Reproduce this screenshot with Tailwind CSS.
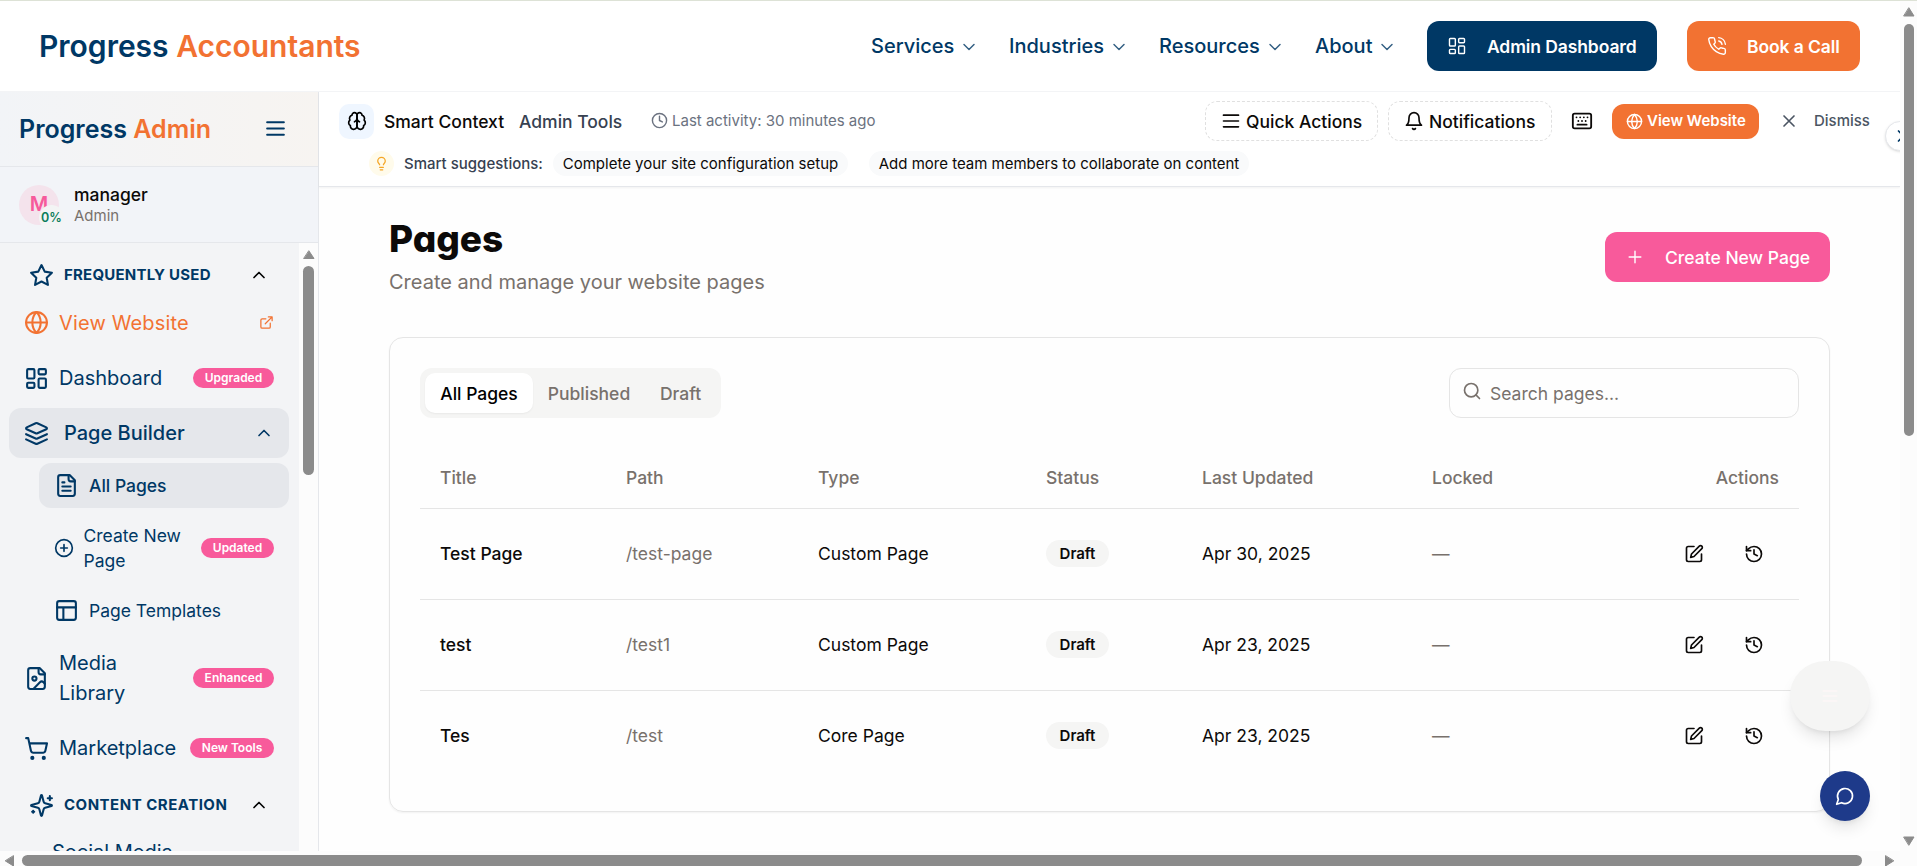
<!DOCTYPE html>
<html lang="en">
<head>
<meta charset="utf-8">
<title>Progress Accountants – Pages</title>
<script src="https://cdn.jsdelivr.net/npm/@tailwindcss/browser@4"></script>
</head>
<body class="font-['Inter','Liberation_Sans',sans-serif] text-[17.5px] leading-[25px] text-[#0c0a09] bg-white [&_svg]:[stroke-linecap:round] [&_svg]:[stroke-linejoin:round]">
<svg class="hidden" xmlns="http://www.w3.org/2000/svg">
  <symbol id="dash" viewBox="0 0 24 24"><rect width="7" height="9" x="3" y="3" rx="1"/><rect width="7" height="5" x="14" y="3" rx="1"/><rect width="7" height="9" x="14" y="12" rx="1"/><rect width="7" height="5" x="3" y="16" rx="1"/></symbol>
  <symbol id="phone" viewBox="0 0 24 24"><path d="M22 16.92v3a2 2 0 0 1-2.18 2 19.79 19.79 0 0 1-8.63-3.07 19.5 19.5 0 0 1-6-6 19.79 19.79 0 0 1-3.07-8.67A2 2 0 0 1 4.11 2h3a2 2 0 0 1 2 1.72 12.84 12.84 0 0 0 .7 2.81 2 2 0 0 1-.45 2.11L8.09 9.91a16 16 0 0 0 6 6l1.27-1.27a2 2 0 0 1 2.11-.45 12.84 12.84 0 0 0 2.81.7A2 2 0 0 1 22 16.92z"/><path d="M14.05 2a9 9 0 0 1 8 7.94"/><path d="M14.05 6A5 5 0 0 1 18 10"/></symbol>
  <symbol id="down" viewBox="0 0 24 24"><path d="m6 9 6 6 6-6"/></symbol>
  <symbol id="up" viewBox="0 0 24 24"><path d="m18 15-6-6-6 6"/></symbol>
  <symbol id="right" viewBox="0 0 24 24"><path d="m9 18 6-6-6-6"/></symbol>
  <symbol id="menu" viewBox="0 0 24 24"><path d="M4 6h16M4 12h16M4 18h16"/></symbol>
  <symbol id="menuwide" viewBox="0 0 24 24"><path d="M3 5h18M3 12h18M3 19h18"/></symbol>
  <symbol id="brain" viewBox="0 0 24 24"><path d="M12 5a3 3 0 1 0-5.997.125 4 4 0 0 0-2.526 5.77 4 4 0 0 0 .556 6.588A4 4 0 1 0 12 18Z"/><path d="M12 5a3 3 0 1 1 5.997.125 4 4 0 0 1 2.526 5.77 4 4 0 0 1-.556 6.588A4 4 0 1 1 12 18Z"/><path d="M15 13a4.5 4.5 0 0 1-3-4 4.500 4.500 0 0 1-3 4"/></symbol>
  <symbol id="clock" viewBox="0 0 24 24"><circle cx="12" cy="12" r="10"/><path d="M12 6v6l4 2"/></symbol>
  <symbol id="bulb" viewBox="0 0 24 24"><path d="M15 14c.2-1 .7-1.700 1.500-2.500 1-.9 1.500-2.200 1.500-3.500A6 6 0 0 0 6 8c0 1 .2 2.200 1.500 3.500.7.7 1.300 1.500 1.500 2.500"/><path d="M9 18h6M10 22h4"/></symbol>
  <symbol id="bell" viewBox="0 0 24 24"><path d="M6 8a6 6 0 0 1 12 0c0 7 3 9 3 9H3s3-2 3-9"/><path d="M10.300 21a1.940 1.940 0 0 0 3.400 0"/></symbol>
  <symbol id="keyb" viewBox="0 0 24 24"><path d="M6 8h.01M10 8h.01M14 8h.01M18 8h.01M8 12h.01M12 12h.01M16 12h.01M7 16h10"/><rect width="20" height="16" x="2" y="4" rx="2"/></symbol>
  <symbol id="globe" viewBox="0 0 24 24"><circle cx="12" cy="12" r="10"/><path d="M12 2a14.500 14.500 0 0 0 0 20 14.500 14.500 0 0 0 0-20M2 12h20"/></symbol>
  <symbol id="x" viewBox="0 0 24 24"><path d="M18 6 6 18M6 6l12 12"/></symbol>
  <symbol id="plus" viewBox="0 0 24 24"><path d="M5 12h14M12 5v14"/></symbol>
  <symbol id="search" viewBox="0 0 24 24"><circle cx="11" cy="11" r="8"/><path d="m21 21-4.300-4.300"/></symbol>
  <symbol id="edit" viewBox="0 0 24 24"><path d="M12 3H5a2 2 0 0 0-2 2v14a2 2 0 0 0 2 2h14a2 2 0 0 0 2-2v-7"/><path d="M18.375 2.625a2.121 2.121 0 1 1 3 3L12 15l-4 1 1-4Z"/></symbol>
  <symbol id="hist" viewBox="0 0 24 24"><path d="M3 12a9 9 0 1 0 9-9 9.750 9.750 0 0 0-6.740 2.740L3 8"/><path d="M3 3v5h5M12 7v5l4 2"/></symbol>
  <symbol id="star" viewBox="0 0 24 24"><path d="M12 2l3.090 6.260L22 9.270l-5 4.870 1.180 6.880L12 17.770l-6.180 3.250L7 14.140 2 9.270l6.910-1.010L12 2z"/></symbol>
  <symbol id="ext" viewBox="0 0 24 24"><path d="M15 3h6v6M10 14 21 3M18 13v6a2 2 0 0 1-2 2H5a2 2 0 0 1-2-2V8a2 2 0 0 1 2-2h6"/></symbol>
  <symbol id="layers" viewBox="0 0 24 24"><path d="m12.830 2.180a2 2 0 0 0-1.660 0L2.600 6.080a1 1 0 0 0 0 1.830l8.580 3.910a2 2 0 0 0 1.660 0l8.580-3.900a1 1 0 0 0 0-1.830Z"/><path d="m22 17.650-9.170 4.160a2 2 0 0 1-1.660 0L2 17.650"/><path d="m22 12.650-9.170 4.160a2 2 0 0 1-1.660 0L2 12.650"/></symbol>
  <symbol id="file" viewBox="0 0 24 24"><path d="M15 2H6a2 2 0 0 0-2 2v16a2 2 0 0 0 2 2h12a2 2 0 0 0 2-2V7Z"/><path d="M14 2v4a2 2 0 0 0 2 2h4M10 9H8M16 13H8M16 17H8"/></symbol>
  <symbol id="cplus" viewBox="0 0 24 24"><circle cx="12" cy="12" r="10"/><path d="M8 12h8M12 8v8"/></symbol>
  <symbol id="layout" viewBox="0 0 24 24"><rect width="18" height="18" x="3" y="3" rx="2"/><path d="M3 9h18M9 21V9"/></symbol>
  <symbol id="fimg" viewBox="0 0 24 24"><path d="M15 2H6a2 2 0 0 0-2 2v16a2 2 0 0 0 2 2h12a2 2 0 0 0 2-2V7Z"/><path d="M14 2v4a2 2 0 0 0 2 2h4"/><circle cx="10" cy="12" r="2"/><path d="m20 17-1.296-1.296a2.410 2.410 0 0 0-3.408 0L9 22"/></symbol>
  <symbol id="cart" viewBox="0 0 24 24"><circle cx="8" cy="21" r="1"/><circle cx="19" cy="21" r="1"/><path d="M2.050 2.050h2l2.660 12.420a2 2 0 0 0 2 1.580h9.780a2 2 0 0 0 1.950-1.570l1.650-7.430H5.120"/></symbol>
  <symbol id="spark" viewBox="0 0 24 24"><path d="M9.937 15.500A2 2 0 0 0 8.500 14.063l-6.135-1.582a.5.5 0 0 1 0-.962L8.500 9.936A2 2 0 0 0 9.937 8.500l1.582-6.135a.5.5 0 0 1 .963 0L14.063 8.500A2 2 0 0 0 15.500 9.937l6.135 1.581a.5.5 0 0 1 0 .964L15.500 14.063a2 2 0 0 0-1.437 1.437l-1.582 6.135a.5.5 0 0 1-.963 0z"/><path d="M20 3v4M22 5h-4M4 17v2M5 18H3"/></symbol>
  <symbol id="chat" viewBox="0 0 24 24"><path d="M7.900 20A9 9 0 1 0 4 16.100L2 22Z"/></symbol>
</svg>

<div class="relative w-[1917px] h-[866px] overflow-hidden flex flex-col">
  <div class="flex h-[851px]">
    <div class="w-[1900px] flex flex-col relative overflow-hidden">
      <!-- Site header -->
      <header class="h-[92px] shrink-0 border-t border-t-[#dde2d6] border-b border-b-[#f3f4f6] flex items-center pl-[39px] pr-10 pb-px text-[#003865]">
        <div class="text-[30px] leading-[38px] font-semibold whitespace-nowrap">Progress <span class="text-[#f27232]">Accountants</span></div>
        <nav class="ml-auto pt-[2px] flex items-center text-[20px] font-medium">
          <a class="flex items-center w-[138px]">Services<svg class="size-5 ml-[5px] fill-none stroke-current stroke-[1.7] opacity-80"><use href="#down"/></svg></a>
          <a class="flex items-center w-[150px]">Industries<svg class="size-5 ml-[5px] fill-none stroke-current stroke-[1.7] opacity-80"><use href="#down"/></svg></a>
          <a class="flex items-center w-[156px]">Resources<svg class="size-5 ml-[5px] fill-none stroke-current stroke-[1.7] opacity-80"><use href="#down"/></svg></a>
          <a class="flex items-center w-[112px]">About<svg class="size-5 ml-[5px] fill-none stroke-current stroke-[1.7] opacity-80"><use href="#down"/></svg></a>
        </nav>
        <a class="w-[230px] h-[50px] rounded-xl bg-[#003865] text-white text-[17.5px] font-semibold flex items-center pl-5 whitespace-nowrap tracking-[-0.1px]"><svg class="size-5 mr-5 fill-none stroke-current stroke-[1.7]"><use href="#dash"/></svg><span class="pt-px">Admin Dashboard</span></a>
        <a class="ml-[30px] w-[173px] h-[50px] rounded-xl bg-[#f27232] text-white text-[17.5px] font-semibold flex items-center pl-5 whitespace-nowrap tracking-[-0.1px]"><svg class="size-5 mr-5 fill-none stroke-current stroke-[1.7]"><use href="#phone"/></svg><span class="pt-px">Book a Call</span></a>
      </header>

      <div class="flex flex-1 min-h-0">
        <!-- Sidebar -->
        <aside class="w-[319px] shrink-0 border-r border-[#e5e7eb] bg-[#f3f4f6] flex flex-col text-[#003865]">
          <div class="h-[75px] shrink-0 border-b border-[#e5e7eb] bg-linear-to-r from-[#f2f4f7] to-[#f7f4f1] flex items-center pl-[19px] pr-[30px] pb-px justify-between">
            <div class="text-[25px] leading-[30px] font-semibold whitespace-nowrap">Progress <span class="text-[#f27232]">Admin</span></div>
            <svg class="size-[25px] fill-none stroke-current stroke-2"><use href="#menu"/></svg>
          </div>
          <div class="h-[76px] shrink-0 border-b border-[#e5e7eb] bg-[#f2f4f8] flex items-center pl-[19px] gap-[15px]">
            <div class="relative size-10 rounded-full bg-[#f4e3ec] flex items-center justify-center text-[#f65a9b] text-[20px] font-semibold">M
              <span class="absolute left-5 top-5 size-[25px] rounded-full bg-[#f3f4f4] text-[#0c7d5b] text-[12.5px] font-semibold flex items-center justify-center">0%</span>
            </div>
            <div class="text-[#0c0a09] pt-px"><div class="font-medium leading-[22px]">manager</div><div class="text-[15px] leading-5 text-[#78716c]">Admin</div></div>
          </div>
          <div class="flex flex-1 min-h-0 overflow-hidden">
            <nav class="w-[299px] pt-3 pl-[9px] pr-[10px] flex flex-col gap-[5px] text-[20px] leading-[30px] overflow-hidden">
              <div class="h-[38px] shrink-0 pt-0.5 pl-5 pr-5 flex items-center text-[15px] font-bold tracking-[0.22px] whitespace-nowrap"><svg class="size-[25px] mr-[10px] fill-none stroke-current stroke-2"><use href="#star"/></svg>FREQUENTLY USED<svg class="size-5 ml-auto fill-none stroke-black stroke-2"><use href="#up"/></svg></div>
              <a class="h-[50px] shrink-0 px-[15px] pb-px flex items-center text-[#f27232]"><svg class="size-[25px] mr-[10px] fill-none stroke-current stroke-2"><use href="#globe"/></svg><span class="tracking-[0.15px]">View Website</span><svg class="size-[15px] ml-auto fill-none stroke-current stroke-2"><use href="#ext"/></svg></a>
              <a class="h-[50px] shrink-0 px-[15px] flex items-center"><svg class="size-[25px] mr-[10px] fill-none stroke-current stroke-2"><use href="#dash"/></svg>Dashboard<span class="ml-auto w-[81px] h-5 rounded-full bg-[#f85a9b] text-white text-[12px] leading-5 font-semibold text-center">Upgraded</span></a>
              <a class="h-[50px] shrink-0 px-[15px] rounded-xl bg-[#e5e7eb] flex items-center font-medium"><svg class="size-[25px] mr-[15px] fill-none stroke-current stroke-2"><use href="#layers"/></svg>Page Builder<svg class="size-5 ml-auto fill-none stroke-current stroke-2"><use href="#up"/></svg></a>
              <a class="h-[45px] shrink-0 ml-[30px] px-[15px] rounded-xl bg-[#e5e7eb] flex items-center text-[17.5px] font-medium"><svg class="size-[25px] mr-[10px] fill-none stroke-current stroke-2"><use href="#file"/></svg>All Pages</a>
              <a class="h-[70px] shrink-0 ml-[30px] px-[15px] flex items-center text-[17.5px] leading-[25px]"><svg class="size-5 shrink-0 mr-[9.500px] fill-none stroke-current stroke-2"><use href="#cplus"/></svg><span class="w-[110px]">Create New Page</span><span class="ml-auto w-[73px] h-5 shrink-0 rounded-full bg-[#f85a9b] text-white text-[12px] leading-5 font-semibold text-center">Updated</span></a>
              <a class="h-[45px] shrink-0 ml-[30px] px-[15px] flex items-center text-[17.5px]"><svg class="size-[25px] mr-[10px] fill-none stroke-current stroke-2"><use href="#layout"/></svg>Page Templates</a>
              <a class="h-[80px] shrink-0 px-[15px] flex items-center"><svg class="size-[25px] shrink-0 mr-[10px] fill-none stroke-current stroke-2"><use href="#fimg"/></svg><span class="w-[90px]">Media Library</span><span class="ml-auto w-[81px] h-5 shrink-0 rounded-full bg-[#f85a9b] text-white text-[12px] leading-5 font-semibold text-center">Enhanced</span></a>
              <a class="h-[50px] shrink-0 px-[15px] flex items-center"><svg class="size-[25px] mr-[10px] fill-none stroke-current stroke-2"><use href="#cart"/></svg>Marketplace<span class="ml-auto w-[84px] h-5 rounded-full bg-[#f85a9b] text-white text-[12px] leading-5 font-semibold text-center">New Tools</span></a>
              <div class="h-[40px] shrink-0 mt-[7px] pl-5 pr-5 flex items-center text-[15px] font-bold tracking-[0.5px] whitespace-nowrap"><svg class="size-[25px] mr-[10px] fill-none stroke-current stroke-2"><use href="#spark"/></svg>CONTENT CREATION<svg class="size-5 ml-auto fill-none stroke-black stroke-2"><use href="#up"/></svg></div>
              <a class="shrink-0 mt-[7px] pl-[43px] w-[180px]">Social Media</a>
            </nav>
            <div class="w-[19px] bg-[#fcfcfc] flex flex-col items-center pt-[7px]">
              <svg class="w-3 h-[9px] fill-[#8b8b8b] stroke-[#8b8b8b]" viewBox="0 0 12 9"><path d="M6 1 11 8.500H1z"/></svg>
              <div class="mt-[7px] w-[11px] h-[209px] rounded-full bg-[#8b8b8b]"></div>
            </div>
          </div>
        </aside>

        <!-- Content column -->
        <div class="flex-1 min-w-0 flex flex-col bg-[#fefefe]">
          <section class="h-[95px] shrink-0 border-b border-[#e5e7eb] shadow-xs bg-white pt-[9px] pl-5 flex flex-col whitespace-nowrap">
            <div class="flex items-center h-10">
              <div class="size-[35px] rounded-[10px] bg-[#eff6ff] flex items-center justify-center"><svg class="size-5 fill-none stroke-black stroke-2"><use href="#brain"/></svg></div>
              <span class="ml-[10px] w-[135px] font-medium">Smart Context</span>
              <span class="w-[132px] text-[#374151] font-medium">Admin Tools</span>
              <svg class="size-[17px] mr-[4px] -mt-px fill-none stroke-[#6b7280] stroke-2"><use href="#clock"/></svg>
              <span class="text-[15px] -mt-0.5 text-[#6b7280]">Last activity: 30 minutes ago</span>
              <div class="ml-auto w-[173px] h-10 rounded-xl border border-dashed border-[#e0e0e0] flex items-center pl-[15px] font-medium"><svg class="size-5 mr-[5px] fill-none stroke-current stroke-2"><use href="#menuwide"/></svg>Quick Actions</div>
              <div class="ml-[10px] w-[164px] h-10 rounded-xl border border-dashed border-[#e0e0e0] flex items-center pl-[15px] font-medium"><svg class="size-5 mr-[5px] fill-none stroke-current stroke-2"><use href="#bell"/></svg>Notifications</div>
              <svg class="size-[22px] ml-[19px] mr-[19px] fill-none stroke-current stroke-2"><use href="#keyb"/></svg>
              <div class="w-[147px] h-[35px] rounded-xl bg-[#f27232] text-white text-[15px] font-semibold flex items-center pl-[14px]"><svg class="size-[17px] mr-[4px] fill-none stroke-current stroke-2"><use href="#globe"/></svg><span class="-mt-px">View Website</span></div>
              <svg class="size-5 ml-5 fill-none stroke-[#4b5563] stroke-2"><use href="#x"/></svg>
              <span class="ml-[15px] w-[86px] text-[15px] font-medium -mt-0.5 text-[#4b5563]">Dismiss</span>
            </div>
            <div class="flex items-center mt-[10px] pl-[30px] text-[15px]">
              <div class="size-[25px] rounded-full bg-[#fffbeb] flex items-center justify-center"><svg class="size-[15px] fill-none stroke-[#f5a524] stroke-2"><use href="#bulb"/></svg></div>
              <span class="ml-[10px] w-[149px] font-medium text-[#374151]">Smart suggestions:</span>
              <span class="w-[295px] rounded-full bg-[#f9fafb] text-center">Complete your site configuration setup</span>
              <span class="ml-[21px] w-[380px] rounded-full bg-[#f9fafb] text-center">Add more team members to collaborate on content</span>
            </div>
          </section>

          <main class="pl-[70px] pt-[29px] w-[1511px]">
            <div class="flex justify-between">
              <div>
                <h1 class="text-[37px] leading-[45px] font-extrabold [font-feature-settings:'cv11'] tracking-[-0.05px]">Pages</h1>
                <p class="mt-[6px] text-[20px] leading-[30px] text-[#78716c]">Create and manage your website pages</p>
              </div>
              <a class="mt-[16px] w-[225px] h-[50px] rounded-xl bg-[#f85a9b] text-white font-medium flex items-center pl-5 whitespace-nowrap"><svg class="size-5 mr-5 fill-none stroke-current stroke-[1.7]"><use href="#plus"/></svg><span>Create New Page</span></a>
            </div>
            <div class="mt-[40px] h-[475px] rounded-[14px] border border-[#e5e5e5] shadow-xs px-[30px] pt-[30px]">
              <div class="flex justify-between">
                <div class="w-[301px] h-[50px] rounded-xl bg-[#f5f5f4] p-[5px] flex font-medium text-[#78716c] leading-[41px]">
                  <span class="w-[108px] h-10 rounded-[10px] bg-white text-black text-center shadow-xs">All Pages</span><span class="w-[112px] text-center">Published</span><span class="w-[71px] text-center">Draft</span>
                </div>
                <div class="w-[350px] h-[50px] rounded-xl border border-[#e5e5e5] flex items-center pl-3 text-[#78716c]"><svg class="size-5 mr-2 -mt-[4px] fill-none stroke-current stroke-2"><use href="#search"/></svg>Search pages...</div>
              </div>
              <table class="mt-[29px] w-full table-fixed text-left">
                <colgroup><col class="w-[186px]"><col class="w-[192px]"><col class="w-[228px]"><col class="w-[156px]"><col class="w-[230px]"><col class="w-[150px]"><col></colgroup>
                <thead><tr class="h-[61px] border-b border-[#e5e5e5] text-[#78716c] [&>th]:font-medium [&>th]:pl-5">
                  <th>Title</th><th>Path</th><th>Type</th><th>Status</th><th>Last Updated</th><th>Locked</th><th class="text-right pr-5">Actions</th></tr></thead>
                <tbody class="[&>tr]:h-[91px] [&>tr>td]:pl-5">
                  <tr class="border-b border-[#e5e5e5]"><td class="font-medium">Test Page</td><td class="text-[#78716c]">/test-page</td><td>Custom Page</td><td><span class="block w-[63px] h-[27px] rounded-full bg-[#f5f5f4] text-[15px] leading-[27px] font-semibold text-center">Draft</span></td><td>Apr 30, 2025</td><td class="text-[#78716c]">—</td><td><div class="flex justify-end gap-10 pr-[35px]"><svg class="size-5 fill-none stroke-current stroke-2"><use href="#edit"/></svg><svg class="size-5 fill-none stroke-current stroke-2"><use href="#hist"/></svg></div></td></tr>
                  <tr class="border-b border-[#e5e5e5]"><td class="font-medium">test</td><td class="text-[#78716c]">/test1</td><td>Custom Page</td><td><span class="block w-[63px] h-[27px] rounded-full bg-[#f5f5f4] text-[15px] leading-[27px] font-semibold text-center">Draft</span></td><td>Apr 23, 2025</td><td class="text-[#78716c]">—</td><td><div class="flex justify-end gap-10 pr-[35px]"><svg class="size-5 fill-none stroke-current stroke-2"><use href="#edit"/></svg><svg class="size-5 fill-none stroke-current stroke-2"><use href="#hist"/></svg></div></td></tr>
                  <tr><td class="font-medium">Tes</td><td class="text-[#78716c]">/test</td><td>Core Page</td><td><span class="block w-[63px] h-[27px] rounded-full bg-[#f5f5f4] text-[15px] leading-[27px] font-semibold text-center">Draft</span></td><td>Apr 23, 2025</td><td class="text-[#78716c]">—</td><td><div class="flex justify-end gap-10 pr-[35px]"><svg class="size-5 fill-none stroke-current stroke-2"><use href="#edit"/></svg><svg class="size-5 fill-none stroke-current stroke-2"><use href="#hist"/></svg></div></td></tr>
                </tbody>
              </table>
            </div>
          </main>
        </div>
      </div>

      <!-- Floating controls -->
      <div class="absolute left-[1885px] top-[121px] size-[30px] rounded-full border border-[#e5e7eb] bg-white shadow-sm flex items-center justify-center pl-[2px]"><svg class="size-5 shrink-0 fill-none stroke-[#003865] stroke-2"><use href="#right"/></svg></div>
      <div class="absolute left-[1790px] top-[661px] w-20 h-[70px] rounded-full bg-[#f5f5f4] shadow-lg flex items-center justify-center"><svg class="size-5 fill-none stroke-[#fdf6f6] stroke-2"><use href="#menu"/></svg></div>
      <div class="absolute left-[1820px] top-[771px] size-[50px] rounded-full bg-[#1e3a8a] shadow-lg flex items-center justify-center"><svg class="size-5 fill-none stroke-white stroke-2"><use href="#chat"/></svg></div>
    </div>
    <!-- Vertical scrollbar -->
    <div class="w-[17px] border-t border-[#dde2d6] bg-[#fcfcfc] flex flex-col items-center pt-[6px] pb-[5px]">
      <svg class="w-3 h-[10px] shrink-0 fill-[#8b8b8b] stroke-[#8b8b8b]" viewBox="0 0 12 10"><path d="M6 1 11 9H1z"/></svg>
      <div class="mt-[7px] w-[10px] h-[412px] shrink-0 rounded-full bg-[#8b8b8b]"></div>
      <svg class="w-3 h-[10px] mt-auto shrink-0 fill-[#8b8b8b] stroke-[#8b8b8b]" viewBox="0 0 12 10"><path d="M1 1h10L6 9z"/></svg>
    </div>
  </div>
  <!-- Horizontal scrollbar -->
  <div class="h-[15px] bg-[#fcfcfc] flex items-start pt-1 pl-1">
    <svg class="w-[10px] h-3 shrink-0 fill-[#8b8b8b] stroke-[#8b8b8b]" viewBox="0 0 10 12"><path d="M9.500 1v10L1.500 6z"/></svg>
    <div class="ml-2 w-[1840px] h-[11px] rounded-full bg-[#8b8b8b]"></div>
    <svg class="ml-[23px] w-[10px] h-3 shrink-0 fill-[#8b8b8b] stroke-[#8b8b8b]" viewBox="0 0 10 12"><path d="M.5 1v10L8.500 6z"/></svg>
  </div>
</div>
</body>
</html>
